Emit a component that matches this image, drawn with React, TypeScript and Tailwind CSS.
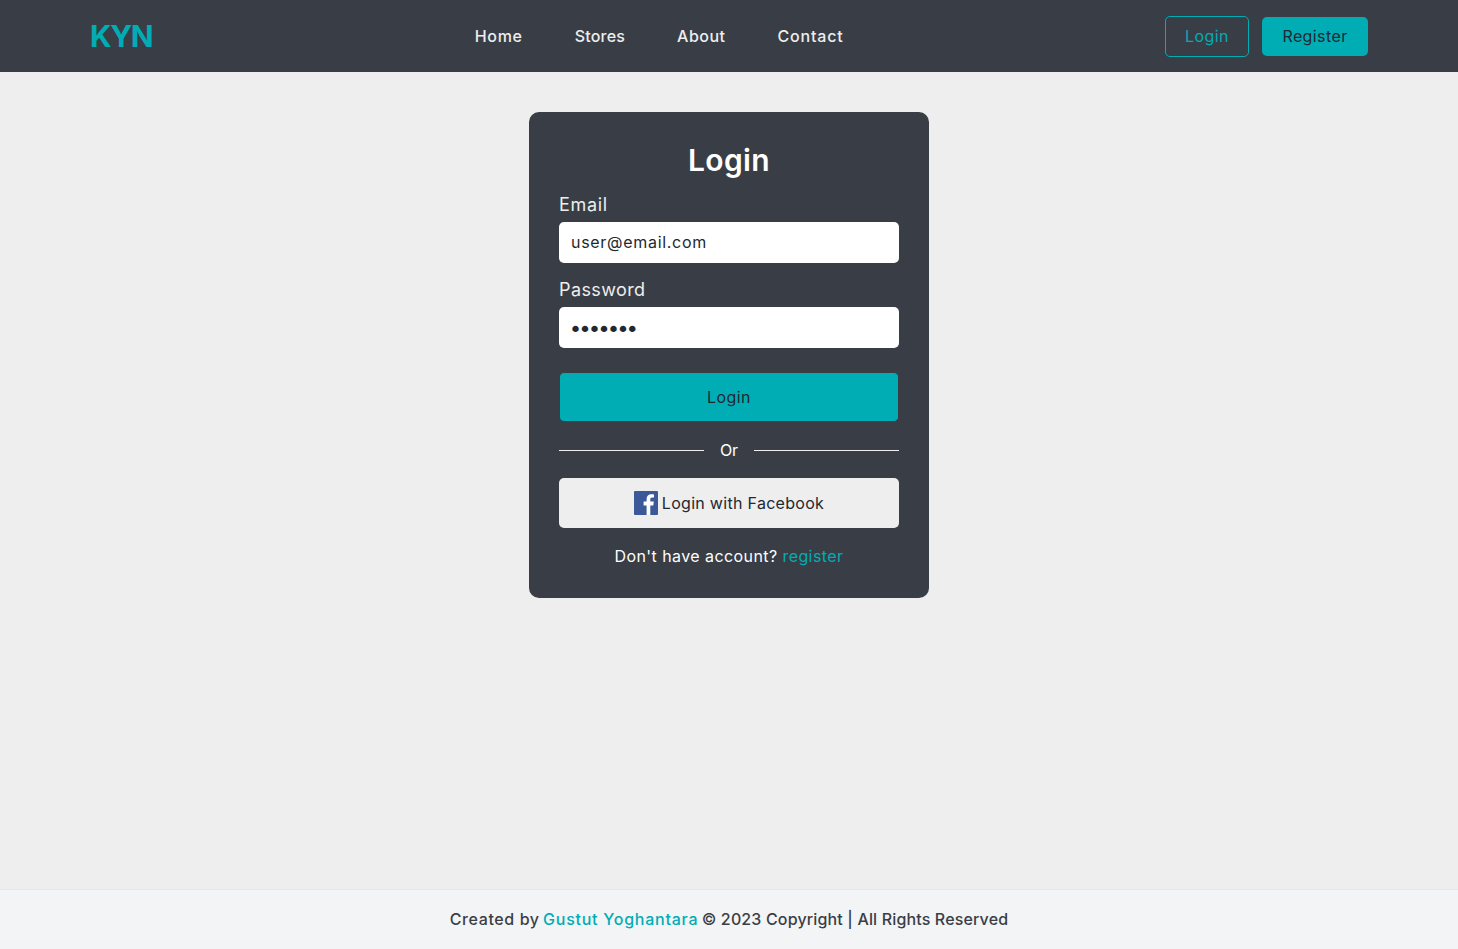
import React from 'react';

const FacebookIcon: React.FC = () => (
  <svg width="24" height="24" viewBox="0 0 24 24" className="shrink-0">
    <rect width="24" height="24" rx="1" fill="#3B5998" />
    <path
      d="M12.6 24V14.4H9.6V10.6H12.6V8C12.6 4.9 14.5 3.2 17.2 3.2C18.5 3.2 19.6 3.3 20 3.4V6.6H18.1C16.6 6.6 16.3 7.3 16.3 8.4V10.6H19.8L19.3 14.4H16.3V24Z"
      fill="#fff"
    />
  </svg>
);

const NavBar: React.FC = () => {
  return (
    <nav className="h-[72px] shrink-0 bg-[#393E46] px-[90px] flex items-center justify-between">
      <a className="text-[30px] font-bold text-[#00ADB5] tracking-[-1.4px]">KYN</a>
      <ul className="flex items-center gap-[52px] ml-[1px] text-[16px] font-medium text-[#EEEEEE]">
        <li className="tracking-[0.7px]">Home</li>
        <li className="tracking-[0.2px]">Stores</li>
        <li className="tracking-[0.5px]">About</li>
        <li className="tracking-[0.8px]">Contact</li>
      </ul>
      <div className="flex items-center gap-[13px] text-[16px] tracking-[0.4px]">
        <button className="h-[41px] w-[84px] rounded-[5px] border border-[#00ADB5] text-[#00ADB5]">Login</button>
        <button className="h-[39px] w-[106px] rounded-[5px] bg-[#00ADB5] text-[#222831]">Register</button>
      </div>
    </nav>
  );
};

const LoginCard: React.FC = () => {
  return (
    <form className="w-[400px] h-[486px] rounded-[10px] bg-[#393E46] px-[30px] pt-[26px] text-[#EEEEEE]">
      <h1 className="text-[30px] leading-[45px] font-semibold tracking-[0.4px] text-white text-center mb-[8px]">Login</h1>

      <label className="block text-[18px] leading-[27px] tracking-[0.7px] h-[31px]">Email</label>
      <input
        readOnly
        type="email"
        value="user@email.com"
        className="block w-full h-[41px] rounded-[5px] bg-white px-3 pb-[2px] text-[16px] text-[#222831] tracking-[0.7px] outline-none"
      />

      <label className="block text-[18px] leading-[27px] tracking-[0.4px] mt-[13px] h-[31px]">Password</label>
      <input
        readOnly
        type="password"
        value="1234567"
        className="block w-full h-[41px] rounded-[5px] bg-white pl-[10px] pr-3 pt-[4px] font-['DejaVu_Sans',sans-serif] text-[22px] tracking-[-3.5px] text-[#222831] outline-none"
      />

      <button
        type="button"
        className="block w-full h-[50px] mt-[24px] rounded-[5px] border border-[#393E46] bg-[#00ADB5] text-[16px] text-[#222831] tracking-[0.4px]"
      >
        Login
      </button>

      <div className="flex items-center gap-[16px] h-[24px] mt-[16px] text-[16px] text-white">
        <span className="flex-1 h-px bg-[#EEEEEE]" />
        <span>Or</span>
        <span className="flex-1 h-px bg-[#EEEEEE]" />
      </div>

      <button
        type="button"
        className="flex items-center justify-center gap-1 w-full h-[50px] mt-[16px] rounded-[5px] bg-[#EEEEEE] text-[16px] text-[#222831] tracking-[0.3px]"
      >
        <FacebookIcon />
        Login with Facebook
      </button>

      <p className="mt-[16px] text-center text-[16px] leading-[24px] tracking-[0.42px] text-white">
        Don't have account? <a className="text-[#00ADB5]">register</a>
      </p>
    </form>
  );
};

export default function App() {
  return (
    <div className="min-h-screen flex flex-col bg-[#EEEEEE] font-['Inter','Noto_Sans',sans-serif]">
      <NavBar />
      <main className="flex-1 flex justify-center pt-10">
        <LoginCard />
      </main>
      <footer className="h-[60px] shrink-0 pb-[2px] flex items-center justify-center border-t border-gray-200 bg-gray-100 text-[16px] font-[450] text-[#393E46]">
        <span className="tracking-[0.15px]">
          <span className="tracking-[0.6px]">Created by</span>{' '}
          <a className="-mx-[1px] text-[#00ADB5] tracking-[0.75px]">Gustut Yoghantara</a> © 2023 Copyright | All Rights Reserved
        </span>
      </footer>
    </div>
  );
}
